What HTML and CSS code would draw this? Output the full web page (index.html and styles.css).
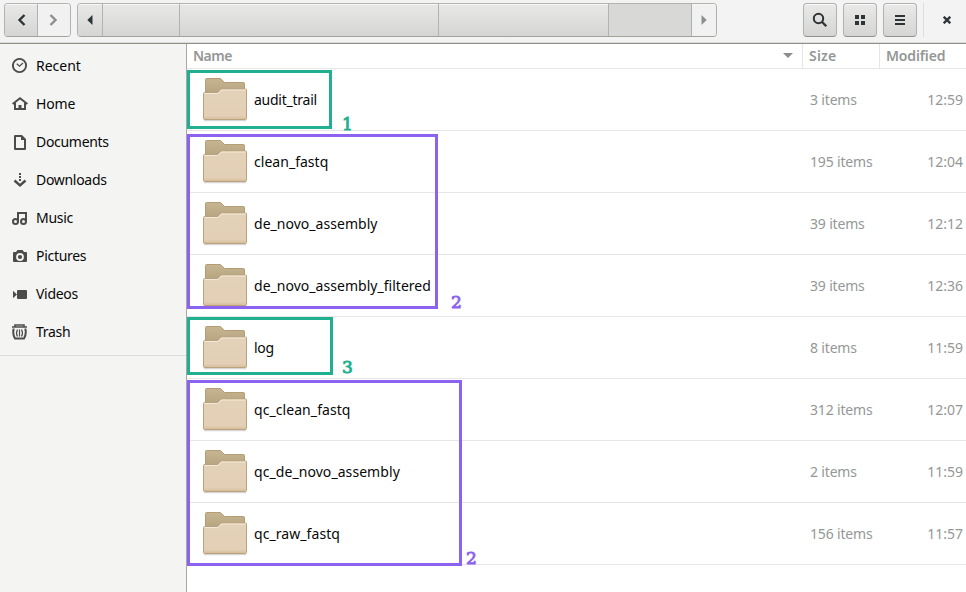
FILE: index.html
```
<!DOCTYPE html>
<html lang="en">
<head>
<meta charset="utf-8">
<title>Files</title>
<link rel="stylesheet" href="styles.css">
</head>
<body>
<svg width="0" height="0" class="defs">
<defs>
<linearGradient id="back" x1="0" y1="0" x2="0" y2="1"><stop offset="0" stop-color="#c7b591"/><stop offset="1" stop-color="#b39f7b"/></linearGradient>
<linearGradient id="front" x1="0" y1="0" x2="0" y2="1"><stop offset="0" stop-color="#e4d2b8"/><stop offset=".88" stop-color="#e2cfb5"/><stop offset="1" stop-color="#d5bb96"/></linearGradient>
<symbol id="folder" viewBox="0 0 46 46">
<path d="M2 43h42v1.300H2z" fill="#000" opacity=".16"/>
<path d="M3.500 20V2.500q0-1 1-1h14l4 4h19q1 0 1 1V20z" fill="url(#back)" stroke="#b49d75"/>
<path d="M1.500 14.500q0-1 1-1h13l3.500-3.500h24.500q1 0 1 1v28.500q0 1-1 1h-41q-1 0-1-1z" fill="url(#front)" stroke="#bba27e" transform="translate(0 2)"/>
<path d="M2.500 16.500h13.500l3.500-3.500h24" fill="none" stroke="#f3e9da"/>
</symbol>
</defs>
</svg>
<header class="bar">
<div class="group nav">
<div class="seg back"><svg width="16" height="16"><path d="M11.500 3L6.500 8l5 5" fill="none" stroke="#2e3436" stroke-width="2.400"/></svg></div>
<div class="seg fwd"><svg width="16" height="16"><path d="M4.500 3l5 5-5 5" fill="none" stroke="#8b8e8f" stroke-width="2.400"/></svg></div>
</div>
<div class="group path">
<div class="seg s1"><svg width="6" height="10"><path d="M5.500 0v10L.3 5z" fill="#2e3436"/></svg></div>
<div class="seg s2"></div><div class="seg s3"></div><div class="seg s4"></div><div class="seg s5"></div>
<div class="seg s6"><svg width="6" height="10"><path d="M.5 0v10l5.200-5z" fill="#8b8e8f"/></svg></div>
</div>
<div class="tools">
<div class="btn"><svg width="16" height="16"><circle cx="6.500" cy="6.500" r="4.700" fill="none" stroke="#2e3436" stroke-width="2"/><path d="M9.800 9.800l4.500 4.500" stroke="#2e3436" stroke-width="2.300"/></svg></div>
<div class="btn"><svg width="16" height="16"><path d="M3 3h4v4H3zM9 3h4v4H9zM3 9h4v4H3zM9 9h4v4H9z" fill="#2e3436"/></svg></div>
<div class="btn"><svg width="16" height="16"><path d="M3 3h10v2H3zM3 7h10v2H3zM3 11h10v2H3z" fill="#2e3436"/></svg></div>
</div>
<div class="close"><svg width="8" height="8"><path d="M.7.7l6.600 6.600M7.300.7L.7 7.300" stroke="#2e3436" stroke-width="2.300"/></svg></div>
</header>
<div class="body">
<nav class="side">
<div class="place"><svg width="16" height="16"><circle cx="7.500" cy="7.500" r="6.600" fill="none" stroke="#4c4c4a" stroke-width="1.900"/><path d="M4.800 5.800l2.700 2.500L11 5" fill="none" stroke="#4c4c4a" stroke-width="1.200"/></svg><span>Recent</span></div>
<div class="place"><svg width="16" height="16"><path d="M.6 8L8 2.200 15.400 8" fill="none" stroke="#4c4c4a" stroke-width="2"/><path d="M3 7v6h10V7" fill="none" stroke="#4c4c4a" stroke-width="2"/><path d="M6.500 9h3v5h-3z" fill="#4c4c4a"/></svg><span>Home</span></div>
<div class="place"><svg width="16" height="16"><path d="M3 2h6.500L13 5.500V15H3z" fill="none" stroke="#4c4c4a" stroke-width="2" stroke-linejoin="round"/><path d="M9 1v5h5z" fill="#4c4c4a"/></svg><span>Documents</span></div>
<div class="place"><svg width="16" height="16"><path d="M7 1h2v2H7zM7 4h2v2H7zM7 7h2v2H7z" fill="#4c4c4a"/><path d="M2.500 8.500L8 13.500l5.500-5" fill="none" stroke="#4c4c4a" stroke-width="2.400"/></svg><span>Downloads</span></div>
<div class="place"><svg width="16" height="16"><path d="M6 12V3h8v9" fill="none" stroke="#4c4c4a" stroke-width="2"/><circle cx="3.500" cy="11.500" r="2.500" fill="none" stroke="#4c4c4a" stroke-width="2"/><circle cx="11.500" cy="11.500" r="2.500" fill="none" stroke="#4c4c4a" stroke-width="2"/></svg><span>Music</span></div>
<div class="place"><svg width="16" height="16"><path d="M1 5q0-1 1-1h2l1.500-2h5L12 4h2q1 0 1 1v8q0 1-1 1H2q-1 0-1-1z" fill="#4c4c4a"/><circle cx="8" cy="9" r="3" fill="none" stroke="#f4f4f2" stroke-width="1.800"/></svg><span>Pictures</span></div>
<div class="place"><svg width="16" height="16"><rect x="5" y="4" width="10" height="9" rx="1" fill="#4c4c4a"/><path d="M1 4.800l4 3.700-4 3.700z" fill="#4c4c4a"/></svg><span>Videos</span></div>
<div class="place"><svg width="16" height="16"><path d="M0 3h15M3 3V1h9v2" fill="none" stroke="#4c4c4a" stroke-width="1.600"/><path d="M2.500 5.500H1.500q-1 5 1.500 9h9q2.500-4 1.500-9h-1" fill="none" stroke="#4c4c4a" stroke-width="2"/><path d="M5.500 5.500q-2 3.500 0 7M7.500 5.500v7M9.500 5.500q2 3.500 0 7" fill="none" stroke="#4c4c4a" stroke-width="1.200"/></svg><span>Trash</span></div>
</nav>
<main class="list">
<div class="head"><div class="name"><span>Name</span><i class="sort"></i></div><div class="size">Size</div><div class="mod">Modified</div></div>
<div class="row"><svg class="folder"><use href="#folder"/></svg><span class="file tight">audit_trail</span><span class="count">3 items</span><span class="time">12:59</span></div>
<div class="row"><svg class="folder"><use href="#folder"/></svg><span class="file">clean_fastq</span><span class="count">195 items</span><span class="time">12:04</span></div>
<div class="row"><svg class="folder"><use href="#folder"/></svg><span class="file">de_novo_assembly</span><span class="count">39 items</span><span class="time">12:12</span></div>
<div class="row"><svg class="folder"><use href="#folder"/></svg><span class="file">de_novo_assembly_filtered</span><span class="count">39 items</span><span class="time">12:36</span></div>
<div class="row"><svg class="folder"><use href="#folder"/></svg><span class="file tight">log</span><span class="count">8 items</span><span class="time">11:59</span></div>
<div class="row"><svg class="folder"><use href="#folder"/></svg><span class="file loose">qc_clean_fastq</span><span class="count">312 items</span><span class="time">12:07</span></div>
<div class="row"><svg class="folder"><use href="#folder"/></svg><span class="file loose">qc_de_novo_assembly</span><span class="count">2 items</span><span class="time">11:59</span></div>
<div class="row"><svg class="folder"><use href="#folder"/></svg><span class="file loose">qc_raw_fastq</span><span class="count">156 items</span><span class="time">11:57</span></div>
<div class="mark green m1"><b>1</b></div>
<div class="mark violet m2"><b>2</b></div>
<div class="mark green m3"><b>3</b></div>
<div class="mark violet m4"><b>2</b></div>
</main>
</div>
</body>
</html>
```
FILE: styles.css
```
* { box-sizing: border-box; }
body { margin: 0; width: 966px; height: 592px; overflow: hidden; display: flex; flex-direction: column; background: #fff; color: #080808; font: 14px/20px "Noto Sans", sans-serif; }
svg { display: block; flex: none; }
.defs { position: absolute; }
.bar { height: 44px; flex: none; display: flex; align-items: flex-start; padding: 3px 0 0 4px; background: #f3f3f3; border-bottom: 1px solid #8e8f87; box-shadow: inset 0 -1px #dcdcda; }
.group { display: flex; height: 34px; border: 1px solid #b2b3ae; border-bottom-color: #a2a39d; border-radius: 4px; overflow: hidden; }
.seg { display: flex; align-items: center; justify-content: center; background: linear-gradient(#e8e8e7, #d5d5d3); border-right: 1px solid #b2b3ae; box-shadow: inset 0 1px #f7f7f7; }
.seg:last-child { border-right: 0; }
.nav { width: 67px; margin-right: 6px; }
.back { width: 33px; }
.fwd { flex: 1; background: #f1f1f1; }
.path { width: 640px; }
.s1 { width: 25px; }
.s2 { width: 77px; }
.s3 { width: 259px; }
.s4 { width: 170px; }
.s5 { width: 83px; background: #d8d8d7; box-shadow: none; }
.s6 { flex: 1; background: #f1f1f1; }
.tools { display: flex; gap: 6px; margin-left: 86px; }
.btn { width: 34px; height: 34px; display: flex; align-items: center; justify-content: center; background: linear-gradient(#e9e9e8, #d5d5d3); border: 1px solid #b2b3ae; border-bottom-color: #91928b; border-radius: 4px; box-shadow: inset 0 1px #fafafa; }
.close { margin-left: 6px; height: 34px; width: 43px; border-left: 1px solid #dcdcda; padding: 13px 0 0 19px; }
.body { flex: 1; display: flex; min-height: 0; }
.side { width: 187px; flex: none; background: #f4f4f2; border-right: 1px solid #a7a8a2; padding-top: 3px; }
.side::after { content: ""; display: block; border-top: 1px solid #dcdcda; margin-top: 4px; }
.place { height: 38px; display: flex; align-items: center; padding-left: 12px; gap: 8px; letter-spacing: -.3px; }
.place:first-child { letter-spacing: 0; }
.place:nth-child(2) { letter-spacing: -.15px; }
.list { flex: 1; position: relative; }
.head { display: flex; height: 25px; border-bottom: 1px solid #e6e6e6; color: #949796; font-weight: 600; line-height: 23px; letter-spacing: -.15px; }
.name { width: 615px; padding: 0 9px 0 6px; display: flex; justify-content: space-between; align-items: center; height: 23px; letter-spacing: -.5px; }
.sort { border: 5px solid transparent; border-top-color: #8b8e8f; border-bottom: 0; }
.size { width: 77px; border-left: 1px solid #e6e6e6; padding-left: 6px; letter-spacing: .2px; }
.mod { flex: 1; border-left: 1px solid #e6e6e6; padding-left: 6px; }
.row { height: 62px; display: flex; align-items: center; border-bottom: 1px solid #e6e6e6; }
.folder { width: 46px; height: 46px; margin: 0 6px 0 15px; }
.file { width: 556px; letter-spacing: .03px; }
.tight { letter-spacing: -.25px; }
.loose { letter-spacing: .07px; }
.count { width: 80px; color: #949796; letter-spacing: -.17px; }
.time { flex: 1; text-align: right; padding-right: 3px; color: #949796; }
.mark { position: absolute; left: 0; border: 3px solid; }
.mark b { position: absolute; left: 100%; font: 400 17px/20px "DejaVu Serif", serif; -webkit-text-stroke: .9px currentColor; }
.green { color: #20b090; }
.violet { color: #8b63f0; }
.m1 { top: 26px; width: 145px; height: 59px; }
.m2 { top: 90px; width: 251px; height: 175px; }
.m3 { top: 273px; width: 146px; height: 58px; }
.m4 { top: 336px; width: 275px; height: 186px; }
.m1 b { top: 41px; margin-left: 13px; }
.m2 b { top: 155px; margin-left: 16px; }
.m3 b { top: 37px; margin-left: 12px; }
.m4 b { top: 165px; margin-left: 7px; }
```
